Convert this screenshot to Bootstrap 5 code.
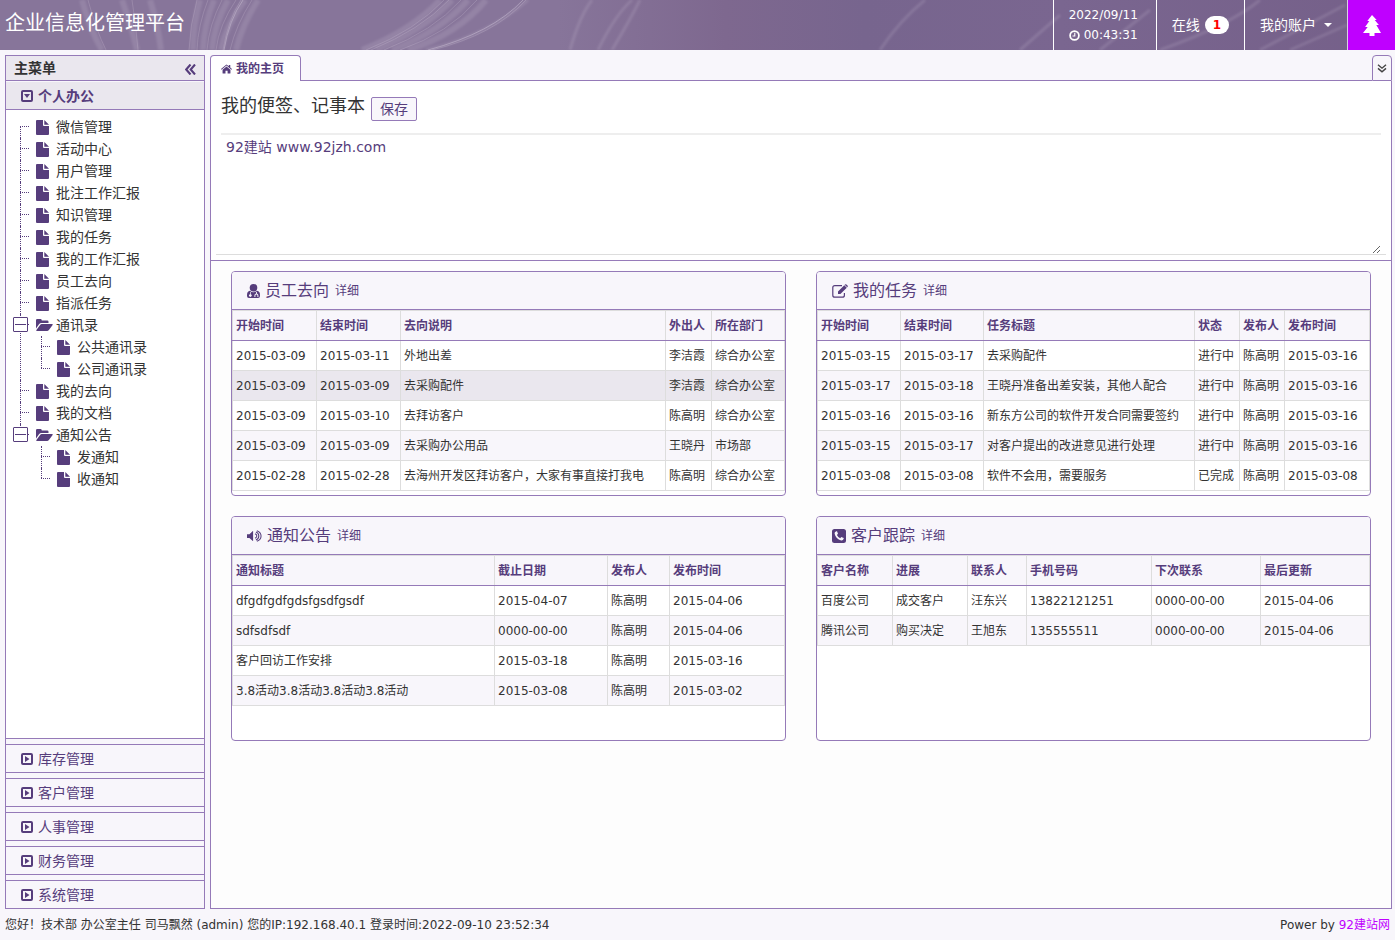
<!DOCTYPE html>
<html lang="zh-CN">
<head>
<meta charset="utf-8">
<meta name="viewport" content="width=device-width, initial-scale=1">
<title>企业信息化管理平台</title>
<link href="https://cdn.jsdelivr.net/npm/bootstrap@5.3.0/dist/css/bootstrap.min.css" rel="stylesheet">
<style>
:root{--line:#957ab8;--ink:#563d7c;--pale:#f8f6fb;--tint:#eae7ee;--grid:#ddd;--hot:#bf00ff}
body{font-family:"DejaVu Sans","Noto Sans CJK SC",sans-serif;font-size:12px;line-height:20px;color:#333;background:var(--pale)}
a{color:inherit;text-decoration:none}
svg.ico{fill:currentColor;flex:none}
.ink{color:var(--ink)}
.topbar{height:50px;background:linear-gradient(90deg,#87759a 0,#87759a 40%,#7e688f 52%,#77658e 62%,#7a6690 76%,#756089 100%);color:#fff}
.streaks{inset:0;z-index:0;fill:none;stroke:#d9cfe0}
.brand{font-size:20px;line-height:46px;padding-left:5px}
.cell{border-left:1px solid #fff;height:50px;padding:0 15px}
.clock{min-width:103px}
.text14{font-size:14px;gap:5px}
.online{background:#fff;color:#f00;font-size:12px;line-height:18px;padding:0 8px;border-radius:9px}
.theme{width:48px;background:var(--hot);color:#fff;border:0;border-left:1px solid #d9cfe8}
.acct::after{margin-left:3px}
.workspace{padding:5px 3px 0 5px;gap:5px}
.side{width:200px;border:1px solid var(--line);gap:5px}
.side-head{height:25px;background:var(--tint);border-bottom:1px solid var(--line);font-size:14px;font-weight:700;padding:0 8px}
.plain{background:none;border:0;padding:0;color:var(--ink);line-height:1}
.group-btn{height:29px;width:100%;border:1px solid var(--line);border-width:1px 0;background:var(--pale);color:var(--ink);font-size:14px;padding:0 15px;gap:5px;text-align:left}
.side .group-btn:last-child{height:28px;border-bottom:0}
.group-open{margin-top:-4px;border-top:0;background:var(--tint);font-weight:700;height:28px}
.group-body{margin-top:-5px;background:#fff;border-bottom:1px solid var(--line);padding:6px 0 0 14px}
.tree,.tree ul{list-style:none;margin:0;padding:0}
.tree ul{margin-left:5px}
.tree li{position:relative;padding-left:16px}
.tree li::before{content:"";position:absolute;left:0;top:0;bottom:0;border-left:1px dotted var(--ink)}
.tree li::after{content:"";position:absolute;left:0;top:10px;width:9px;border-top:1px dotted var(--ink)}
.tree>li:first-child::before{top:10px}
.tree li:last-child::before{bottom:auto;height:10px}
.leaf{height:22px;font-size:14px;line-height:22px;gap:7px}
.leaf.dir{gap:3px}
.fold{position:absolute;z-index:1;left:-7px;top:3px;width:15px;height:15px;background:#fff;border:1px solid var(--ink);padding:0;border-radius:1px}
.fold::before{content:"";display:block;margin:0 1px;border-top:1px solid var(--ink)}
.tabs{height:26px}
.tab-on{height:26px;border:1px solid var(--line);border-bottom:0;border-radius:4px 4px 0 0;background:#fff;color:var(--ink);font-weight:700;font-size:12px;padding:0 16px 0 10px;gap:4px}
.tab-rest{border-bottom:1px solid var(--line)}
.tab-more{width:20px;height:26px;border:1px solid var(--line);border-radius:4px 4px 0 0;background:var(--pale);padding:0;color:#444}
.pane{border:1px solid var(--line);border-top:0;background:#fdfdfd}
.memo{background:#fff;border-bottom:1px solid var(--line);padding:0 5px 5px}
.memo-in{border-bottom:1px solid var(--grid);padding:0 5px}
.memo-title{font-size:18px;line-height:50px;height:52px;padding-bottom:2px;gap:6px}
.save{font-size:14px;line-height:22px;padding:0 8px;border:1px solid var(--line);background:var(--pale);color:var(--ink);border-radius:2px;margin-top:6px}
.memo textarea{display:block;width:100%;height:121px;border:0;border-top:2px solid #eee;outline:0;background:#fff;color:var(--ink);font-size:14px;line-height:20px;padding:2px 5px;resize:vertical}
.boards{padding:10px 20px;gap:20px 30px;grid-template-columns:1fr 1fr}
.board{min-height:225px;border:1px solid var(--line);border-radius:4px;background:#fff;overflow:hidden}
.board-head{height:38px;border-bottom:1px solid var(--line);background:var(--pale);color:var(--ink);padding:0 15px}
.board-head h2{font-size:16px;line-height:36px;margin:0 6px 0 5px;font-weight:400}
.grid-table{width:100%;table-layout:fixed;border-collapse:collapse;color:#333}
.grid-table th,.grid-table td{height:30px;border:1px solid var(--grid);padding:0 0 0 3px;white-space:nowrap;overflow:hidden}
.grid-table th{background:var(--pale);color:var(--ink);border-bottom-color:var(--line)}
.grid-table tbody tr:nth-child(even){background:var(--pale)}
.grid-table tbody tr.picked{background:var(--tint)}
.foot{padding:0 5px;height:31px}
.foot a{color:var(--hot)}
.w45{width:45px}.w46{width:46px}.w59{width:59px}.w62{width:62px}.w73{width:73px}.w75{width:75px}.w83{width:83px}.w84{width:84px}.w85{width:85px}.w109{width:109px}.w113{width:113px}.w115{width:115px}.w125{width:125px}
</style>
</head>
<body class="d-flex flex-column min-vh-100">
<svg width="0" height="0" class="position-absolute" aria-hidden="true">
<symbol id="i-file" viewBox="0 0 13 15"><path d="M1 0h6v5q0 1 1 1H13V14q0 1-1 1H1q-1 0-1-1V1q0-1 1-1zM8.300 0L13 4.700H8.300z"/></symbol>
<symbol id="i-folder" viewBox="0 0 17 12"><path d="M0 9.500V1.200Q0 0 1.200 0h3.300q1.200 0 1.200 1.200v.4h5.600q1.200 0 1.200 1.200V4H5.300Q4 4 3 5.200zM4.300 5.700Q4.800 5 5.700 5H16q1.400 0 .6 1l-3.700 5q-.8 1-1.800 1H1q-1.300 0-.6-1z"/></symbol>
<symbol id="i-down" viewBox="0 0 12 12"><path fill-rule="evenodd" d="M2 0h8q2 0 2 2v8q0 2-2 2H2q-2 0-2-2V2q0-2 2-2zM2 2v8h8V2zM3 4h6L6 8z"/></symbol>
<symbol id="i-right" viewBox="0 0 12 12"><path fill-rule="evenodd" d="M2 0h8q2 0 2 2v8q0 2-2 2H2q-2 0-2-2V2q0-2 2-2zM2 2v8h8V2zM4 3l4.500 3L4 9z"/></symbol>
<symbol id="i-home" viewBox="0 0 12 10"><path d="M6 2.200L10.300 5.800V9.400q0 .6-.6.600H7.200V7H4.900v3H2.300q-.6 0-.6-.6V5.800zM5.300.5q.7-.6 1.400 0L8.500 2V.700h1.600v2.700L12 5l-.6.700L6 1.300.6 5.700 0 5z"/></symbol>
<symbol id="i-doc" viewBox="0 0 13 14"><path d="M6.500 0a3.600 3.600 0 110 7.600A3.700 3.700 0 016.500 0z"/><path fill-rule="evenodd" d="M3 6.700Q4.500 8.300 6.500 8.300T10 6.700Q13 7.200 13 11v1q0 2-2 2H2Q0 14 0 12v-1Q0 7.200 3 6.700zM3 8v2.200a1.300 1.300 0 10.700 0V8zM9 8v1.500q-1.600.3-1.600 2V13h1v-1.500q0-1 1-1t1 1V13h1v-1.500q0-1.700-1.500-2V8z"/></symbol>
<symbol id="i-edit" viewBox="0 0 16 14"><path d="M10 1.600H2.800q-2 0-2 2v7.600q0 2 2 2h7.600q2 0 2-2V9" fill="none" stroke="currentColor" stroke-width="1.200"/><path d="M12.300 1.200l2.500 2.500-6.400 6.300H6V7.500zM13 .5q.7-.7 1.400 0l1.100 1.100q.7.700 0 1.400l-.3.300L12.700.8z"/></symbol>
<symbol id="i-sound" viewBox="0 0 16 12"><path d="M0 4h2.600L6.500.500V11.500L2.600 8H0z"/><path d="M8.500 3.700q2 .8 2 2.300t-2 2.300M9.500 1.800Q12.600 3 12.600 6T9.500 10.200M10.500 0.300Q15 2 15 6t-4.500 5.700" fill="none" stroke="currentColor" stroke-width="1.100"/></symbol>
<symbol id="i-phone" viewBox="0 0 14 14"><path fill-rule="evenodd" d="M2.500 0h9Q14 0 14 2.500v9q0 2.500-2.500 2.500h-9Q0 14 0 11.500v-9Q0 0 2.500 0zM4.300 2.300q-2 .7-1.700 2.400 1.200 5 6.600 6.700 1.900.2 2.500-1.700v-.6L9.300 7.900 8.200 9.200Q6 8.100 4.900 5.900L6 4.800 5 2.300z"/></symbol>
<symbol id="i-clock" viewBox="0 0 12 12"><circle cx="6" cy="6" r="4.800" fill="none" stroke="currentColor" stroke-width="1.900"/><path d="M5.700 3h1.200v4H3.800V6h1.900z"/></symbol>
<symbol id="i-tree" viewBox="0 0 18 21"><path d="M9 0l4.700 5h-2l4.200 5h-2.600L18 18h-6.500v3h-5v-3H0l4.700-6H2.100l4.200-6h-2z"/></symbol>
<symbol id="i-left2" viewBox="0 0 11 11"><path d="M5.500 .5L1.200 5.500l4.300 5M10 .5L5.700 5.500l4.300 5" fill="none" stroke="currentColor" stroke-width="2.100"/></symbol>
<symbol id="i-down2" viewBox="0 0 10 9"><path d="M1 .8l4 3.400 4-3.400M1 4.400l4 3.500 4-3.500" fill="none" stroke="currentColor" stroke-width="1.400"/></symbol>
</svg>

<header class="topbar position-relative d-flex">
  <svg class="streaks position-absolute w-100 h-100" viewBox="0 0 1395 50" preserveAspectRatio="xMidYMid slice" aria-hidden="true">
    <defs><filter id="soft"><feGaussianBlur stdDeviation="1"/></filter></defs>
    <g filter="url(#soft)" opacity=".16">
      <path stroke-width="6" d="M82 0Q90 30 102 50M122 0Q132 28 137 50M150 0Q158 25 161 50M200 0Q193 25 193 50M214 0Q204 25 203 50M228 0Q214 25 212 50M245 0Q226 25 221 50M258 0Q242 25 236 50"/>
      <path stroke-width="6" d="M362 50Q412 30 440 0M376 50Q424 30 452 0M392 50Q440 32 468 0M408 50Q458 34 486 0"/>
      <path stroke-width="3" d="M426 50Q486 36 528 0M570 50Q580 15 592 0M598 50Q615 15 632 0M612 50Q630 20 640 0M880 50Q900 20 925 0M1020 50L1060 15M1100 50L1150 10M1160 50Q1230 25 1260 0M1260 50L1345 5M1290 50L1347 25"/>
    </g>
    <g opacity=".22">
      <path d="M241 0Q228 20 223 50M197 0Q190 25 189 50M208 0Q198 25 197 50M222 0Q209 25 207 50M236 0Q219 25 216 50M252 0Q236 25 230 50M132 0Q136 25 138 50M88 0Q96 30 106 50"/>
      <path d="M366 50Q416 30 444 0M371 50Q420 30 449 0M384 50Q433 31 461 0M400 50Q449 33 477 0M432 50Q494 35 526 0"/>
    </g>
    <path opacity=".4" d="M428 50Q492 33 523 0M243 0Q229 20 224 50"/>
  </svg>
  <h1 class="brand fw-normal m-0 me-auto position-relative">企业信息化管理平台</h1>
  <div class="cell clock position-relative d-flex flex-column justify-content-center text-nowrap">
    <span>2022/09/11</span>
    <span class="d-flex align-items-center gap-1"><svg class="ico" width="11" height="11"><use href="#i-clock"/></svg>00:43:31</span>
  </div>
  <a href="#" class="cell text14 position-relative d-flex align-items-center text-nowrap">在线 <span class="online fw-bold">1</span></a>
  <a href="#" class="cell text14 acct position-relative d-flex align-items-center dropdown-toggle text-nowrap">我的账户</a>
  <button class="theme position-relative p-0" aria-label="主题"><svg class="ico" width="18" height="21"><use href="#i-tree"/></svg></button>
</header>

<div class="workspace d-flex flex-grow-1">
  <nav class="side d-flex flex-column flex-shrink-0" aria-label="主菜单">
    <div class="side-head d-flex align-items-center justify-content-between"><span>主菜单</span><button class="plain" aria-label="收起"><svg class="ico" width="11" height="11"><use href="#i-left2"/></svg></button></div>
    <button class="group-btn group-open d-flex align-items-center"><svg class="ico" width="12" height="12"><use href="#i-down"/></svg>个人办公</button>
    <div class="group-body flex-grow-1">
      <ul class="tree">
        <li><a href="#" class="leaf d-flex align-items-center"><svg class="ico ink" width="13" height="15"><use href="#i-file"/></svg>微信管理</a></li>
        <li><a href="#" class="leaf d-flex align-items-center"><svg class="ico ink" width="13" height="15"><use href="#i-file"/></svg>活动中心</a></li>
        <li><a href="#" class="leaf d-flex align-items-center"><svg class="ico ink" width="13" height="15"><use href="#i-file"/></svg>用户管理</a></li>
        <li><a href="#" class="leaf d-flex align-items-center"><svg class="ico ink" width="13" height="15"><use href="#i-file"/></svg>批注工作汇报</a></li>
        <li><a href="#" class="leaf d-flex align-items-center"><svg class="ico ink" width="13" height="15"><use href="#i-file"/></svg>知识管理</a></li>
        <li><a href="#" class="leaf d-flex align-items-center"><svg class="ico ink" width="13" height="15"><use href="#i-file"/></svg>我的任务</a></li>
        <li><a href="#" class="leaf d-flex align-items-center"><svg class="ico ink" width="13" height="15"><use href="#i-file"/></svg>我的工作汇报</a></li>
        <li><a href="#" class="leaf d-flex align-items-center"><svg class="ico ink" width="13" height="15"><use href="#i-file"/></svg>员工去向</a></li>
        <li><a href="#" class="leaf d-flex align-items-center"><svg class="ico ink" width="13" height="15"><use href="#i-file"/></svg>指派任务</a></li>
        <li><button class="fold" aria-label="折叠通讯录"></button><a href="#" class="leaf dir d-flex align-items-center"><svg class="ico ink" width="17" height="12"><use href="#i-folder"/></svg>通讯录</a>
          <ul>
            <li><a href="#" class="leaf d-flex align-items-center"><svg class="ico ink" width="13" height="15"><use href="#i-file"/></svg>公共通讯录</a></li>
            <li><a href="#" class="leaf d-flex align-items-center"><svg class="ico ink" width="13" height="15"><use href="#i-file"/></svg>公司通讯录</a></li>
          </ul></li>
        <li><a href="#" class="leaf d-flex align-items-center"><svg class="ico ink" width="13" height="15"><use href="#i-file"/></svg>我的去向</a></li>
        <li><a href="#" class="leaf d-flex align-items-center"><svg class="ico ink" width="13" height="15"><use href="#i-file"/></svg>我的文档</a></li>
        <li><button class="fold" aria-label="折叠通知公告"></button><a href="#" class="leaf dir d-flex align-items-center"><svg class="ico ink" width="17" height="12"><use href="#i-folder"/></svg>通知公告</a>
          <ul>
            <li><a href="#" class="leaf d-flex align-items-center"><svg class="ico ink" width="13" height="15"><use href="#i-file"/></svg>发通知</a></li>
            <li><a href="#" class="leaf d-flex align-items-center"><svg class="ico ink" width="13" height="15"><use href="#i-file"/></svg>收通知</a></li>
          </ul></li>
      </ul>
    </div>
    <button class="group-btn d-flex align-items-center"><svg class="ico" width="12" height="12"><use href="#i-right"/></svg>库存管理</button>
    <button class="group-btn d-flex align-items-center"><svg class="ico" width="12" height="12"><use href="#i-right"/></svg>客户管理</button>
    <button class="group-btn d-flex align-items-center"><svg class="ico" width="12" height="12"><use href="#i-right"/></svg>人事管理</button>
    <button class="group-btn d-flex align-items-center"><svg class="ico" width="12" height="12"><use href="#i-right"/></svg>财务管理</button>
    <button class="group-btn d-flex align-items-center"><svg class="ico" width="12" height="12"><use href="#i-right"/></svg>系统管理</button>
  </nav>

  <main class="d-flex flex-column flex-grow-1">
    <div class="tabs d-flex">
      <button class="tab-on d-flex align-items-center"><svg class="ico" width="11" height="10"><use href="#i-home"/></svg>我的主页</button>
      <div class="tab-rest flex-grow-1"></div>
      <button class="tab-more d-flex align-items-center justify-content-center" aria-label="更多标签"><svg class="ico" width="10" height="9"><use href="#i-down2"/></svg></button>
    </div>
    <div class="pane flex-grow-1">
      <section class="memo">
        <div class="memo-in">
          <div class="memo-title d-flex align-items-center"><label for="memo">我的便签、记事本</label><button class="save">保存</button></div>
          <textarea id="memo">92建站 www.92jzh.com</textarea>
        </div>
      </section>
      <div class="boards d-grid">
        <section class="board">
          <div class="board-head d-flex align-items-center"><svg class="ico" width="13" height="14"><use href="#i-doc"/></svg><h2>员工去向</h2><a href="#">详细</a></div>
          <table class="grid-table">
            <colgroup><col class="w84"><col class="w84"><col><col class="w46"><col class="w73"></colgroup>
            <thead><tr><th>开始时间</th><th>结束时间</th><th>去向说明</th><th>外出人</th><th>所在部门</th></tr></thead>
            <tbody>
              <tr><td>2015-03-09</td><td>2015-03-11</td><td>外地出差</td><td>李洁霞</td><td>综合办公室</td></tr>
              <tr class="picked"><td>2015-03-09</td><td>2015-03-09</td><td>去采购配件</td><td>李洁霞</td><td>综合办公室</td></tr>
              <tr><td>2015-03-09</td><td>2015-03-10</td><td>去拜访客户</td><td>陈高明</td><td>综合办公室</td></tr>
              <tr><td>2015-03-09</td><td>2015-03-09</td><td>去采购办公用品</td><td>王晓丹</td><td>市场部</td></tr>
              <tr><td>2015-02-28</td><td>2015-02-28</td><td>去海州开发区拜访客户，大家有事直接打我电</td><td>陈高明</td><td>综合办公室</td></tr>
            </tbody>
          </table>
        </section>
        <section class="board">
          <div class="board-head d-flex align-items-center"><svg class="ico" width="16" height="14"><use href="#i-edit"/></svg><h2>我的任务</h2><a href="#">详细</a></div>
          <table class="grid-table">
            <colgroup><col class="w83"><col class="w83"><col><col class="w45"><col class="w45"><col class="w85"></colgroup>
            <thead><tr><th>开始时间</th><th>结束时间</th><th>任务标题</th><th>状态</th><th>发布人</th><th>发布时间</th></tr></thead>
            <tbody>
              <tr><td>2015-03-15</td><td>2015-03-17</td><td>去采购配件</td><td>进行中</td><td>陈高明</td><td>2015-03-16</td></tr>
              <tr><td>2015-03-17</td><td>2015-03-18</td><td>王晓丹准备出差安装，其他人配合</td><td>进行中</td><td>陈高明</td><td>2015-03-16</td></tr>
              <tr><td>2015-03-16</td><td>2015-03-16</td><td>新东方公司的软件开发合同需要签约</td><td>进行中</td><td>陈高明</td><td>2015-03-16</td></tr>
              <tr><td>2015-03-15</td><td>2015-03-17</td><td>对客户提出的改进意见进行处理</td><td>进行中</td><td>陈高明</td><td>2015-03-16</td></tr>
              <tr><td>2015-03-08</td><td>2015-03-08</td><td>软件不会用，需要服务</td><td>已完成</td><td>陈高明</td><td>2015-03-08</td></tr>
            </tbody>
          </table>
        </section>
        <section class="board">
          <div class="board-head d-flex align-items-center"><svg class="ico" width="15" height="12"><use href="#i-sound"/></svg><h2>通知公告</h2><a href="#">详细</a></div>
          <table class="grid-table">
            <colgroup><col><col class="w113"><col class="w62"><col class="w115"></colgroup>
            <thead><tr><th>通知标题</th><th>截止日期</th><th>发布人</th><th>发布时间</th></tr></thead>
            <tbody>
              <tr><td>dfgdfgdfgdsfgsdfgsdf</td><td>2015-04-07</td><td>陈高明</td><td>2015-04-06</td></tr>
              <tr><td>sdfsdfsdf</td><td>0000-00-00</td><td>陈高明</td><td>2015-04-06</td></tr>
              <tr><td>客户回访工作安排</td><td>2015-03-18</td><td>陈高明</td><td>2015-03-16</td></tr>
              <tr><td>3.8活动3.8活动3.8活动3.8活动</td><td>2015-03-08</td><td>陈高明</td><td>2015-03-02</td></tr>
            </tbody>
          </table>
        </section>
        <section class="board">
          <div class="board-head d-flex align-items-center"><svg class="ico" width="14" height="14"><use href="#i-phone"/></svg><h2>客户跟踪</h2><a href="#">详细</a></div>
          <table class="grid-table">
            <colgroup><col class="w75"><col class="w75"><col class="w59"><col class="w125"><col class="w109"><col></colgroup>
            <thead><tr><th>客户名称</th><th>进展</th><th>联系人</th><th>手机号码</th><th>下次联系</th><th>最后更新</th></tr></thead>
            <tbody>
              <tr><td>百度公司</td><td>成交客户</td><td>汪东兴</td><td>13822121251</td><td>0000-00-00</td><td>2015-04-06</td></tr>
              <tr><td>腾讯公司</td><td>购买决定</td><td>王旭东</td><td>135555511</td><td>0000-00-00</td><td>2015-04-06</td></tr>
            </tbody>
          </table>
        </section>
      </div>
    </div>
  </main>
</div>
<footer class="foot d-flex align-items-center justify-content-between"><span>您好！技术部 办公室主任 司马飘然 (admin) 您的IP:192.168.40.1 登录时间:2022-09-10 23:52:34</span><span>Power by <a href="#">92建站网</a></span></footer>
<script src="https://cdn.jsdelivr.net/npm/bootstrap@5.3.0/dist/js/bootstrap.bundle.min.js"></script>
</body>
</html>
